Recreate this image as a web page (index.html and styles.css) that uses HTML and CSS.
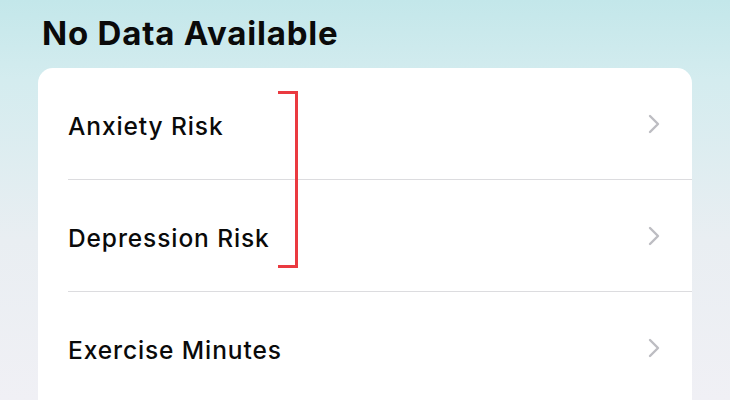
FILE: index.html
```html
<!DOCTYPE html>
<html>
<head>
<meta charset="utf-8">
<link rel="stylesheet" href="styles.css">
</head>
<body>
<div class="page">
  <h1 class="title">No Data Available</h1>
  <div class="card">
    <div class="row">
      <span class="label">Anxiety Risk</span>
      <svg class="chev" width="12" height="20" viewBox="0 0 12 20"><path d="M2 2 L10 10 L2 18" fill="none" stroke="#bdbdc2" stroke-width="2.4" stroke-linecap="round" stroke-linejoin="round"/></svg>
    </div>
    <div class="row">
      <span class="label">Depression Risk</span>
      <svg class="chev" width="12" height="20" viewBox="0 0 12 20"><path d="M2 2 L10 10 L2 18" fill="none" stroke="#bdbdc2" stroke-width="2.4" stroke-linecap="round" stroke-linejoin="round"/></svg>
    </div>
    <div class="row">
      <span class="label">Exercise Minutes</span>
      <svg class="chev" width="12" height="20" viewBox="0 0 12 20"><path d="M2 2 L10 10 L2 18" fill="none" stroke="#bdbdc2" stroke-width="2.4" stroke-linecap="round" stroke-linejoin="round"/></svg>
    </div>
    <div class="bracket"></div>
  </div>
</div>
</body>
</html>
```
FILE: styles.css
```css
html, body {
  margin: 0;
  padding: 0;
}
body {
  width: 730px;
  height: 400px;
  overflow: hidden;
  background: linear-gradient(180deg, #c3e7ea 0%, #d4ecef 20%, #e9eef2 60%, #f0f0f5 100%);
  font-family: Inter, "Noto Sans", sans-serif;
  color: #0a0a0a;
}
.page {
  padding: 13px 38px 0 38px;
}
.title {
  margin: 0 0 0 4px;
  font-size: 33px;
  font-weight: 700;
  line-height: 40px;
  letter-spacing: 0.8px;
}
.card {
  position: relative;
  margin-top: 15px;
  background: #ffffff;
  border-radius: 15px 15px 0 0;
  padding-left: 30px;
  height: 332px;
}
.row {
  height: 112px;
  display: flex;
  align-items: center;
  justify-content: space-between;
  padding-right: 32px;
  border-bottom: 1.5px solid #dcdcdf;
  box-sizing: border-box;
}
.row:last-of-type {
  border-bottom: none;
}
.label {
  font-size: 24.5px;
  font-weight: 500;
  letter-spacing: 0.9px;
  padding-top: 4px;
}
.bracket {
  position: absolute;
  left: 240px;
  top: 23px;
  width: 17px;
  height: 171px;
  border: 3px solid #ea3a40;
  border-left: none;
}
```
